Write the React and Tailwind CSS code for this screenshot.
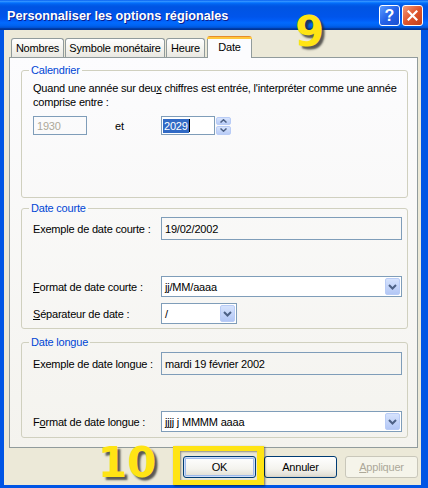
import React from "react";

const Chevron = () => (
  <svg width="9" height="6" viewBox="0 0 9 6">
    <path d="M1 1l3.5 3.5L8 1" fill="none" stroke="#4D6185" strokeWidth="2" />
  </svg>
);

function DropBtn() {
  return (
    <div className="w-[15px] h-[17px] mr-px rounded-[2px] border border-[#B9CCF6] bg-[linear-gradient(to_bottom,#D6E3FD,#B3C7F5)] flex items-center justify-center shrink-0">
      <Chevron />
    </div>
  );
}

function Combo({ widthClass, children }) {
  return (
    <div className={`${widthClass} h-[21px] border border-[#7F9DB9] bg-white flex items-center`}>
      <span className="flex-1 pl-[3px] leading-[14px] whitespace-nowrap overflow-hidden">{children}</span>
      <DropBtn />
    </div>
  );
}

function ReadBox({ children }) {
  return (
    <div className="w-[241px] h-[23px] border border-[#7F9DB9] flex items-center pl-[3px] leading-[14px]">
      {children}
    </div>
  );
}

function Group({ title, className, children }) {
  return (
    <fieldset className={`ml-[11px] w-[387px] border border-[#D0D0BF] rounded-[3px] p-0 ${className}`}>
      <legend className="ml-[7px] px-[2px] text-[#0046D5] leading-[13px]">{title}</legend>
      {children}
    </fieldset>
  );
}

function Tab({ label, className }) {
  return (
    <div
      className={`h-[19px] mb-px rounded-t-[3px] border-x border-t border-[#919B9C] bg-[linear-gradient(to_bottom,#FFFFFF,#F3F2EC_60%,#E9E8E2)] flex items-center justify-center leading-[14px] whitespace-nowrap ${className}`}
    >
      {label}
    </div>
  );
}

function Button({ children, className }) {
  return (
    <div
      className={`w-[73px] h-[22px] rounded-[3px] border border-[#003C74] bg-[linear-gradient(to_bottom,#FFFFFF,#F4F3EE_60%,#E3E1D7_90%,#D6D0C5)] flex items-center justify-center leading-[14px] ${className}`}
    >
      {children}
    </div>
  );
}

export default function App() {
  return (
    <div className="relative w-[428px] h-[488px] overflow-hidden bg-[#0055E5] font-['Liberation_Sans',Arial,sans-serif] text-[11px] tracking-[-0.2px] text-black">
      {/* Title bar */}
      <div className="h-[30px] flex items-center bg-[linear-gradient(to_bottom,#0058EE_0%,#3593FF_4%,#288EFF_6%,#127DFF_8%,#036FFC_10%,#0262EE_14%,#0057E5_20%,#0054E3_24%,#0055EB_56%,#005BF5_66%,#026AFE_76%,#0062EF_86%,#0052D6_92%,#0040AB_94%,#003092_100%)]">
        <span className="pl-[7px] pt-[3px] text-white font-bold text-[12.7px] tracking-normal [text-shadow:1px_1px_0_#0A1E8E]">
          Personnaliser les options régionales
        </span>
        <div className="ml-auto mr-[5px] pt-[1px] flex gap-[2px]">
          <div className="w-[21px] h-[21px] rounded-[3px] border border-white bg-[linear-gradient(135deg,#5A9BFF,#2562E8_50%,#1B4FD0)] flex items-center justify-center text-white font-bold text-[16px] leading-none tracking-normal">
            ?
          </div>
          <div className="w-[21px] h-[21px] rounded-[3px] border border-white bg-[linear-gradient(135deg,#F29B7C,#E0552C_50%,#C2401C)] flex items-center justify-center">
            <svg width="11" height="11" viewBox="0 0 11 11">
              <path d="M1.5 1.5l8 8M9.5 1.5l-8 8" stroke="white" strokeWidth="2.2" strokeLinecap="square" />
            </svg>
          </div>
        </div>
      </div>

      {/* Client area */}
      <div className="ml-[4px] w-[417px] h-[455px] bg-[#ECE9D8]">
        {/* Tabs */}
        <div className="relative z-10 pt-[6px] pl-[7px] -mb-px flex items-end">
          <Tab label="Nombres" className="w-[53px]" />
          <Tab label="Symbole monétaire" className="w-[100px] ml-px" />
          <Tab label="Heure" className="w-[39px] ml-px" />
          <div className="w-[45px] h-[22px] ml-[2px] flex flex-col">
            <div className="h-[3px] rounded-t-[3px] bg-[linear-gradient(to_bottom,#E68B2C_0%,#E68B2C_34%,#FFC73C_35%,#FFC73C_100%)]" />
            <div className="flex-1 border-x border-[#919B9C] bg-[#FCFCFE] flex justify-center pt-[1px] leading-[14px]">
              Date
            </div>
          </div>
        </div>

        {/* Panel */}
        <div className="ml-[5px] w-[409px] h-[391px] border border-[#919B9C] bg-[linear-gradient(to_bottom,#FCFCFE,#F4F3EE)] pt-[6px]">
          <Group title="Calendrier" className="h-[134px]">
            <div className="pt-[4px] pl-[11px] leading-[14px]">
              <div>
                Quand une année sur deu<u>x</u> chiffres est entrée, l'interpréter comme une année
              </div>
              <div>comprise entre :</div>
              <div className="mt-[7px] flex items-center">
                <div className="w-[54px] h-[19px] border border-[#7F9DB9] flex items-center pl-[3px] text-[#ACA899]">
                  1930
                </div>
                <div className="w-[74px] pl-[28px]">et</div>
                <div className="w-[54px] h-[19px] border border-[#7F9DB9] bg-white flex items-center pl-[1px]">
                  <span className="bg-[#316AC5] text-white px-[1px] leading-[14px]">2029</span>
                  <span className="w-px h-[13px] bg-black" />
                </div>
                <div className="ml-[1px] w-[15px] h-[18px] flex flex-col gap-px">
                  <div className="flex-1 rounded-[2px] border border-[#B9CCF6] bg-[linear-gradient(to_bottom,#D6E3FD,#B9CCF6)] flex items-center justify-center">
                    <svg width="7" height="4" viewBox="0 0 7 4">
                      <path d="M0.5 3.5L3.5 0.8L6.5 3.5" fill="none" stroke="#4D6185" strokeWidth="1.5" />
                    </svg>
                  </div>
                  <div className="flex-1 rounded-[2px] border border-[#B9CCF6] bg-[linear-gradient(to_bottom,#D6E3FD,#B9CCF6)] flex items-center justify-center">
                    <svg width="7" height="4" viewBox="0 0 7 4">
                      <path d="M0.5 0.5L3.5 3.2L6.5 0.5" fill="none" stroke="#4D6185" strokeWidth="1.5" />
                    </svg>
                  </div>
                </div>
              </div>
            </div>
          </Group>

          <Group title="Date courte" className="mt-[4px] h-[127px]">
            <div className="pt-[2px] pl-[11px] leading-[14px]">
              <div className="flex items-center">
                <div className="w-[128px]">Exemple de date courte :</div>
                <ReadBox>19/02/2002</ReadBox>
              </div>
              <div className="mt-[36px] flex items-center">
                <div className="w-[128px]">
                  <u>F</u>ormat de date courte :
                </div>
                <Combo widthClass="w-[241px]">jj/MM/aaaa</Combo>
              </div>
              <div className="mt-[6px] flex items-center">
                <div className="w-[128px]">
                  <u>S</u>éparateur de date :
                </div>
                <Combo widthClass="w-[76px]">/</Combo>
              </div>
            </div>
          </Group>

          <Group title="Date longue" className="mt-[7px] h-[102px]">
            <div className="pt-[3px] pl-[11px] leading-[14px]">
              <div className="flex items-center">
                <div className="w-[128px]">Exemple de date longue :</div>
                <ReadBox>mardi 19 février 2002</ReadBox>
              </div>
              <div className="mt-[36px] flex items-center">
                <div className="w-[128px]">
                  F<u>o</u>rmat de date longue :
                </div>
                <Combo widthClass="w-[241px]">jjjj j MMMM aaaa</Combo>
              </div>
            </div>
          </Group>
        </div>

        {/* Buttons */}
        <div className="mt-[8px] pr-[3px] flex justify-end gap-[8px]">
          <Button className="shadow-[inset_0_0_0_1px_#CEDDF8,inset_0_0_0_2px_#9DB9EB]">OK</Button>
          <Button>Annuler</Button>
          <div className="w-[73px] h-[22px] rounded-[3px] border border-[#C9C7BA] bg-[#F5F4EA] flex items-center justify-center leading-[14px] text-[#ACA899]">
            <span>
              <u>A</u>ppliquer
            </span>
          </div>
        </div>
      </div>

      {/* Annotations */}
      <div className="absolute left-[173px] top-[446px] w-[91px] h-[39px] border-x-[7px] border-y-[5px] border-[#FFE414] shadow-[1px_1px_2px_rgba(0,0,0,0.55),inset_1px_1px_2px_rgba(0,0,0,0.4)]" />
      <div className="absolute left-[295px] top-[11px] text-[42px] leading-[42px] font-bold tracking-normal font-['DejaVu_Sans',sans-serif] text-[#FFE414] [text-shadow:3px_3px_2px_rgba(40,40,40,0.75)]">
        9
      </div>
      <div className="absolute left-[98px] top-[442px] text-[42px] leading-[42px] font-bold tracking-normal font-['DejaVu_Sans',sans-serif] text-[#FFE414] [text-shadow:3px_3px_2px_rgba(40,40,40,0.75)]">
        10
      </div>
    </div>
  );
}
